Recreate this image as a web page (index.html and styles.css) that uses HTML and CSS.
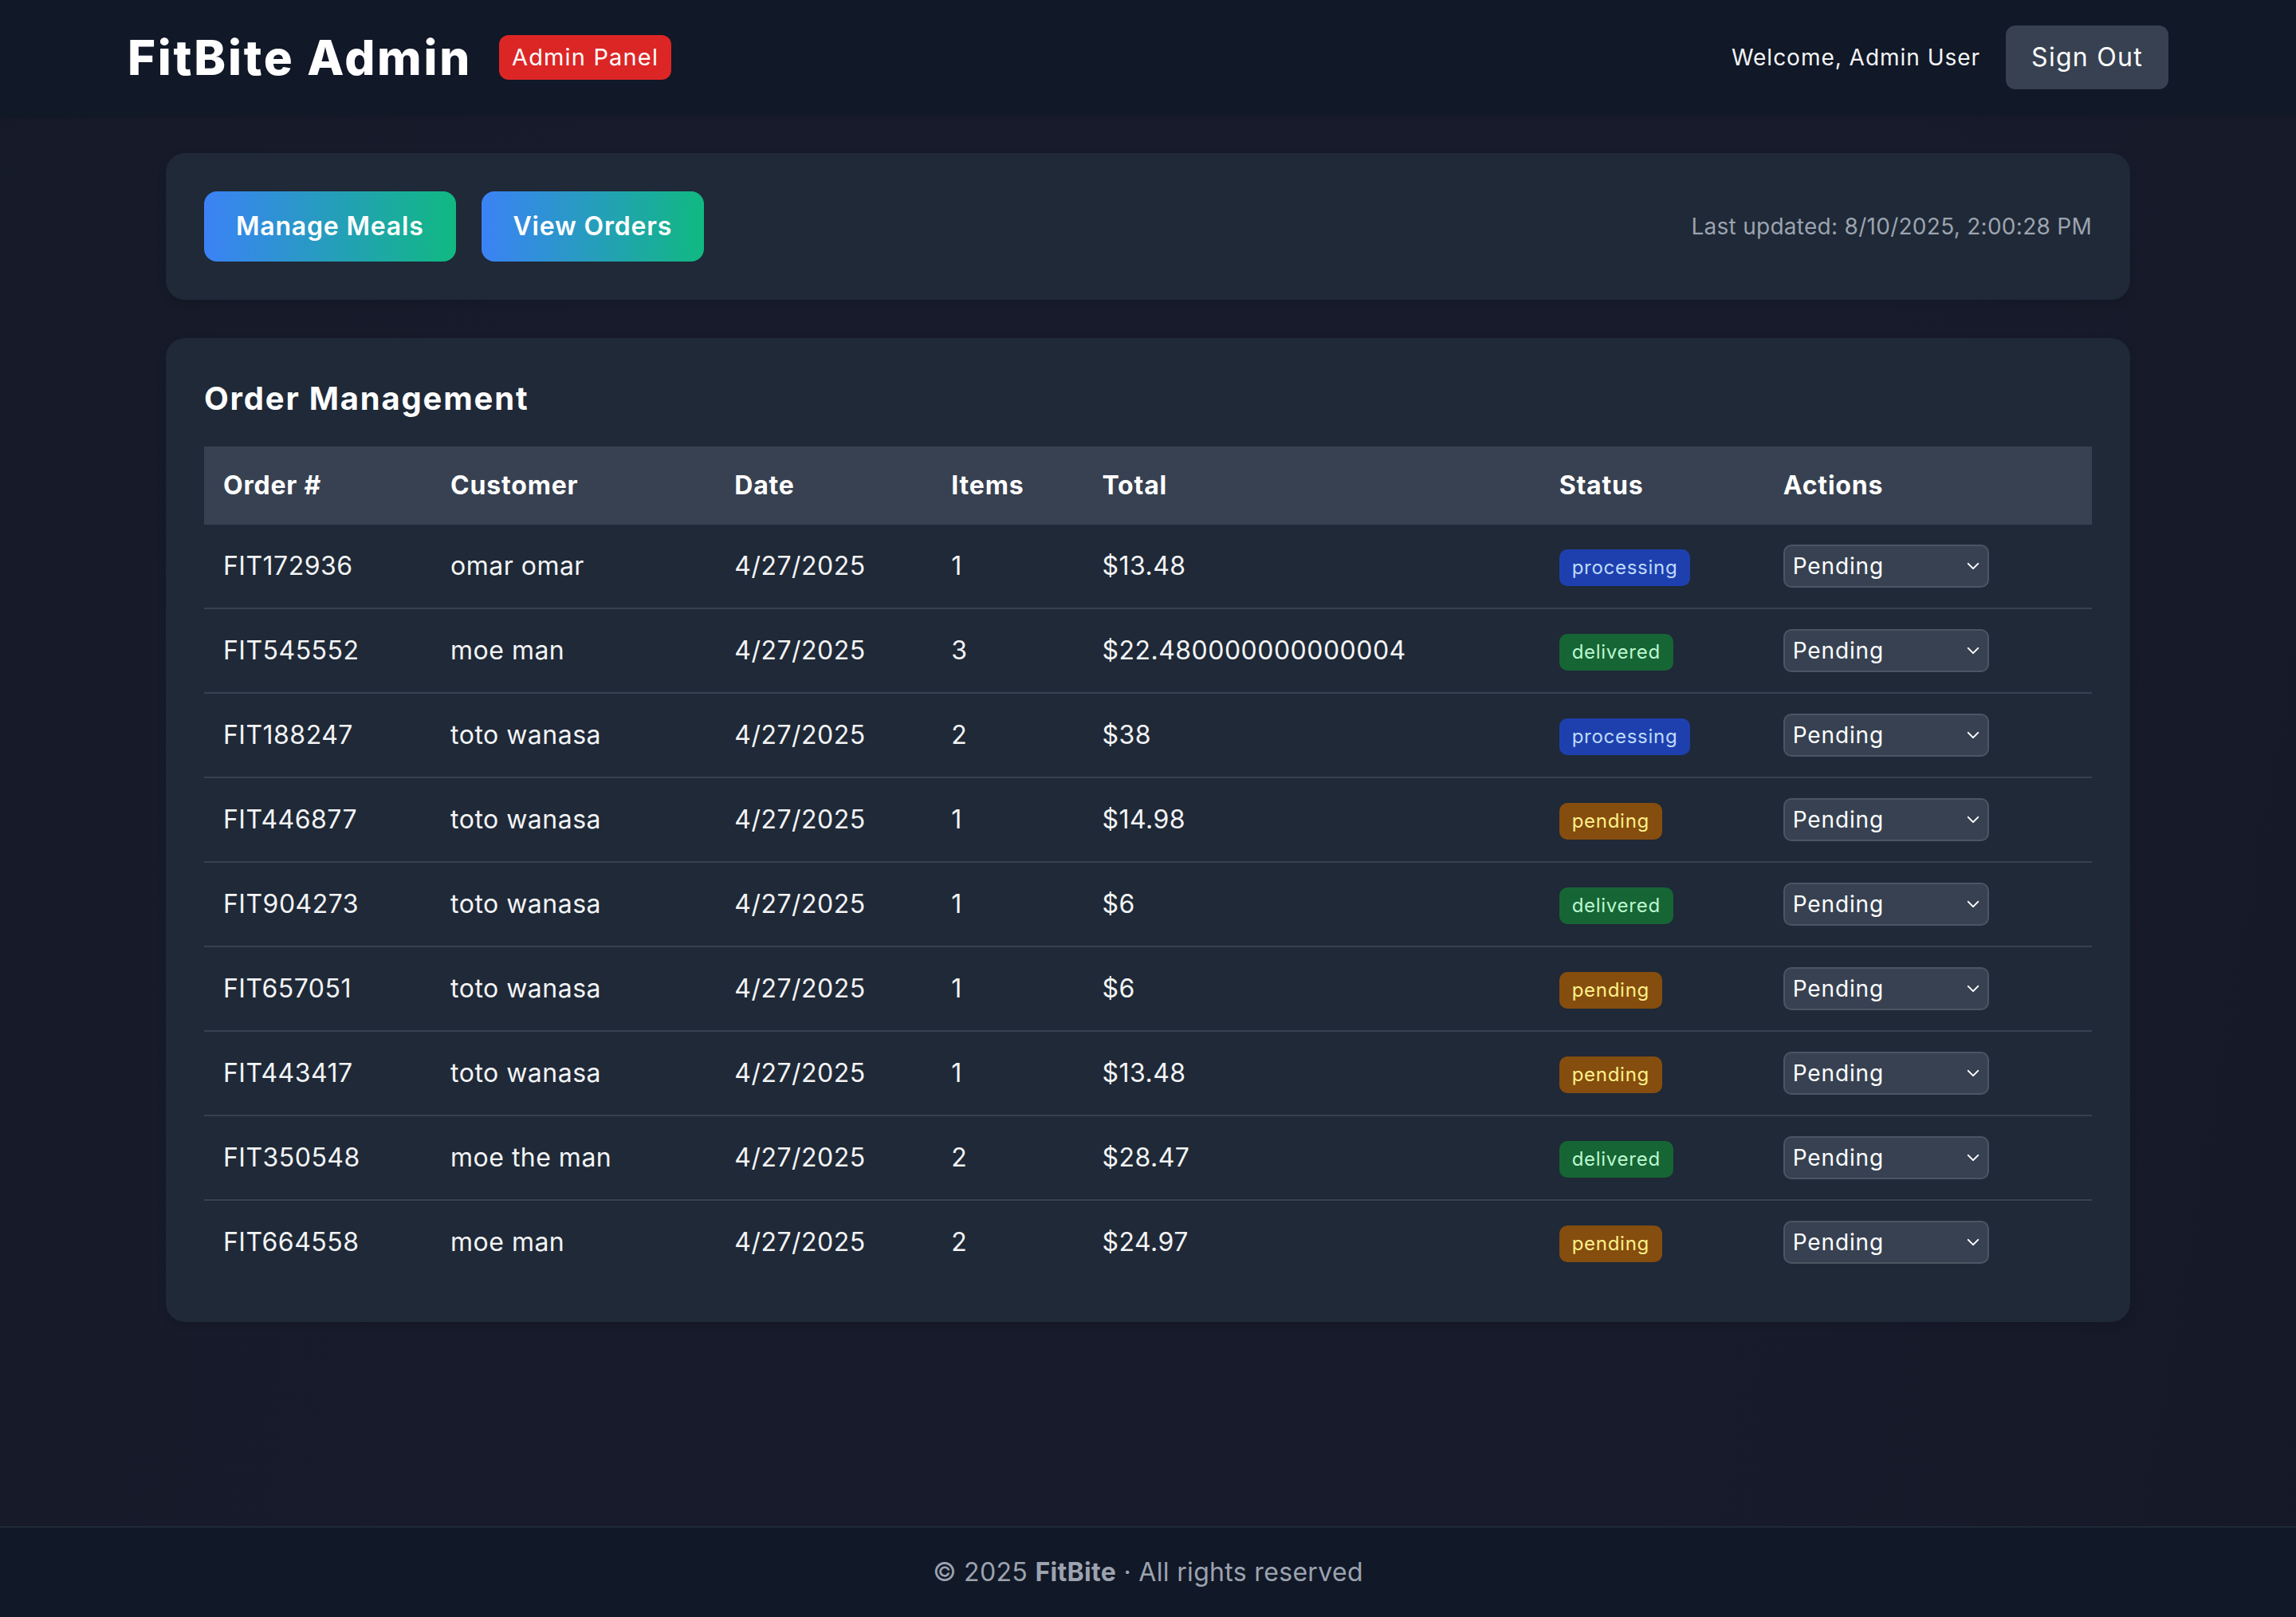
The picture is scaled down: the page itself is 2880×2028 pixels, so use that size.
FILE: index.html
```html
<!DOCTYPE html>
<html lang="en">
<head>
<meta charset="utf-8">
<title>FitBite Admin</title>
<link rel="stylesheet" href="styles.css">
</head>
<body>
<header class="topbar">
  <div class="topbar-inner">
    <div class="brand">
      <h1 class="brand-title">FitBite Admin</h1>
      <span class="brand-badge">Admin Panel</span>
    </div>
    <div class="user-area">
      <span class="welcome">Welcome, Admin User</span>
      <button class="signout">Sign Out</button>
    </div>
  </div>
</header>

<main class="main">
  <section class="card nav-card">
    <div class="nav-buttons">
      <button class="grad-btn">Manage Meals</button>
      <button class="grad-btn">View Orders</button>
    </div>
    <span class="updated">Last updated: 8/10/2025, 2:00:28 PM</span>
  </section>

  <section class="card orders-card">
    <h2 class="section-title">Order Management</h2>
    <table class="orders">
      <colgroup>
        <col class="c-order"><col class="c-customer"><col class="c-date"><col class="c-items"><col class="c-total"><col class="c-status"><col class="c-actions">
      </colgroup>
      <thead>
        <tr><th>Order #</th><th>Customer</th><th>Date</th><th>Items</th><th>Total</th><th>Status</th><th>Actions</th></tr>
      </thead>
      <tbody>
        <tr><td>FIT172936</td><td>omar omar</td><td>4/27/2025</td><td>1</td><td>$13.48</td><td><span class="status processing">processing</span></td><td><div class="select-wrap"><select class="status-select"><option>Pending</option><option>Processing</option><option>Delivered</option></select><svg class="chev" viewBox="0 0 16 16"><path d="M3 5.5l5 5 5-5" fill="none" stroke="currentColor" stroke-width="1.6" stroke-linecap="round" stroke-linejoin="round"/></svg></div></td></tr>
        <tr><td>FIT545552</td><td>moe man</td><td>4/27/2025</td><td>3</td><td>$22.480000000000004</td><td><span class="status delivered">delivered</span></td><td><div class="select-wrap"><select class="status-select"><option>Pending</option><option>Processing</option><option>Delivered</option></select><svg class="chev" viewBox="0 0 16 16"><path d="M3 5.5l5 5 5-5" fill="none" stroke="currentColor" stroke-width="1.6" stroke-linecap="round" stroke-linejoin="round"/></svg></div></td></tr>
        <tr><td>FIT188247</td><td>toto wanasa</td><td>4/27/2025</td><td>2</td><td>$38</td><td><span class="status processing">processing</span></td><td><div class="select-wrap"><select class="status-select"><option>Pending</option><option>Processing</option><option>Delivered</option></select><svg class="chev" viewBox="0 0 16 16"><path d="M3 5.5l5 5 5-5" fill="none" stroke="currentColor" stroke-width="1.6" stroke-linecap="round" stroke-linejoin="round"/></svg></div></td></tr>
        <tr><td>FIT446877</td><td>toto wanasa</td><td>4/27/2025</td><td>1</td><td>$14.98</td><td><span class="status pending">pending</span></td><td><div class="select-wrap"><select class="status-select"><option>Pending</option><option>Processing</option><option>Delivered</option></select><svg class="chev" viewBox="0 0 16 16"><path d="M3 5.5l5 5 5-5" fill="none" stroke="currentColor" stroke-width="1.6" stroke-linecap="round" stroke-linejoin="round"/></svg></div></td></tr>
        <tr><td>FIT904273</td><td>toto wanasa</td><td>4/27/2025</td><td>1</td><td>$6</td><td><span class="status delivered">delivered</span></td><td><div class="select-wrap"><select class="status-select"><option>Pending</option><option>Processing</option><option>Delivered</option></select><svg class="chev" viewBox="0 0 16 16"><path d="M3 5.5l5 5 5-5" fill="none" stroke="currentColor" stroke-width="1.6" stroke-linecap="round" stroke-linejoin="round"/></svg></div></td></tr>
        <tr><td>FIT657051</td><td>toto wanasa</td><td>4/27/2025</td><td>1</td><td>$6</td><td><span class="status pending">pending</span></td><td><div class="select-wrap"><select class="status-select"><option>Pending</option><option>Processing</option><option>Delivered</option></select><svg class="chev" viewBox="0 0 16 16"><path d="M3 5.5l5 5 5-5" fill="none" stroke="currentColor" stroke-width="1.6" stroke-linecap="round" stroke-linejoin="round"/></svg></div></td></tr>
        <tr><td>FIT443417</td><td>toto wanasa</td><td>4/27/2025</td><td>1</td><td>$13.48</td><td><span class="status pending">pending</span></td><td><div class="select-wrap"><select class="status-select"><option>Pending</option><option>Processing</option><option>Delivered</option></select><svg class="chev" viewBox="0 0 16 16"><path d="M3 5.5l5 5 5-5" fill="none" stroke="currentColor" stroke-width="1.6" stroke-linecap="round" stroke-linejoin="round"/></svg></div></td></tr>
        <tr><td>FIT350548</td><td>moe the man</td><td>4/27/2025</td><td>2</td><td>$28.47</td><td><span class="status delivered">delivered</span></td><td><div class="select-wrap"><select class="status-select"><option>Pending</option><option>Processing</option><option>Delivered</option></select><svg class="chev" viewBox="0 0 16 16"><path d="M3 5.5l5 5 5-5" fill="none" stroke="currentColor" stroke-width="1.6" stroke-linecap="round" stroke-linejoin="round"/></svg></div></td></tr>
        <tr><td>FIT664558</td><td>moe man</td><td>4/27/2025</td><td>2</td><td>$24.97</td><td><span class="status pending">pending</span></td><td><div class="select-wrap"><select class="status-select"><option>Pending</option><option>Processing</option><option>Delivered</option></select><svg class="chev" viewBox="0 0 16 16"><path d="M3 5.5l5 5 5-5" fill="none" stroke="currentColor" stroke-width="1.6" stroke-linecap="round" stroke-linejoin="round"/></svg></div></td></tr>
      </tbody>
    </table>
  </section>
</main>

<footer class="footer">
  <p class="footer-text">© 2025 <strong>FitBite</strong> · All rights reserved</p>
</footer>
</body>
</html>
```

FILE: styles.css
```css
* { box-sizing: border-box; }

html, body { margin: 0; padding: 0; }

body {
  min-height: 100vh;
  display: flex;
  flex-direction: column;
  font-family: Inter, "Noto Sans", "DejaVu Sans", sans-serif;
  letter-spacing: 0.02em;
  color: #f3f4f6;
  background: linear-gradient(100deg, #151a28 0%, #181b2b 25%, #181b2b 75%, #151927 100%);
}

/* Header */
.topbar {
  background: #111827;
  box-shadow: 0 2px 6px rgba(0, 0, 0, 0.15);
}

.topbar-inner {
  max-width: 2560px;
  margin: 0 auto;
  padding: 32px 0;
  display: flex;
  align-items: center;
  justify-content: space-between;
}

.brand {
  display: flex;
  align-items: center;
  gap: 34px;
}

.brand-title {
  margin: 0;
  font-size: 60px;
  line-height: 72px;
  font-weight: 800;
  color: #ffffff;
  letter-spacing: 0.045em;
}

.brand-badge {
  background: #dc2626;
  color: #ffffff;
  font-size: 29px;
  line-height: 40px;
  padding: 8px 16px;
  border-radius: 12px;
  letter-spacing: 0.04em;
}

.user-area {
  display: flex;
  align-items: center;
  gap: 32px;
}

.welcome {
  font-size: 28px;
  color: #f3f4f6;
  letter-spacing: 0.035em;
}

.signout {
  font-family: inherit;
  letter-spacing: 0.04em;
  background: #374151;
  color: #ffffff;
  border: 0;
  border-radius: 12px;
  font-size: 32px;
  line-height: 48px;
  padding: 16px 32px;
}

/* Main */
.main {
  flex: 1;
  width: 100%;
  max-width: 2560px;
  margin: 0 auto;
  padding: 48px 48px;
  display: flex;
  flex-direction: column;
  gap: 48px;
}

.card {
  background: #1f2937;
  border-radius: 24px;
  padding: 48px;
  box-shadow: 0 4px 12px rgba(0, 0, 0, 0.12);
}

.nav-card {
  display: flex;
  align-items: center;
  justify-content: space-between;
}

.nav-buttons {
  display: flex;
  gap: 32px;
}

.grad-btn {
  font-family: inherit;
  letter-spacing: 0.025em;
  background: linear-gradient(90deg, #3b82f6 0%, #10b981 100%);
  color: #ffffff;
  border: 0;
  border-radius: 16px;
  font-size: 32px;
  font-weight: 600;
  line-height: 48px;
  padding: 20px 40px;
}

.updated {
  font-size: 28px;
  color: #9ca3af;
  letter-spacing: 0.01em;
}

/* Orders */
.section-title {
  margin: 0 0 32px;
  font-size: 40px;
  line-height: 56px;
  font-weight: 700;
  color: #ffffff;
  letter-spacing: 0.045em;
}

.orders {
  width: 100%;
  border-collapse: collapse;
  table-layout: fixed;
}

.c-order { width: 285px; }
.c-customer { width: 356px; }
.c-date { width: 272px; }
.c-items { width: 189px; }
.c-total { width: 573px; }
.c-status { width: 281px; }
.c-actions { width: 411px; }

.orders th {
  background: #374151;
  text-align: left;
  font-size: 32px;
  line-height: 48px;
  font-weight: 700;
  color: #ffffff;
  padding: 25px 24px;
  letter-spacing: 0.025em;
}

.orders td {
  font-size: 32px;
  line-height: 48px;
  color: #f3f4f6;
  padding: 25px 24px;
  vertical-align: middle;
  white-space: nowrap;
  letter-spacing: 0.015em;
}

.orders tbody tr + tr td {
  border-top: 2px solid #374151;
}

.status {
  display: inline-block;
  font-size: 24px;
  line-height: 32px;
  padding: 7px 16px;
  border-radius: 10px;
  letter-spacing: 0.03em;
}

.status.processing { background: #1e40af; color: #bfdbfe; }
.status.delivered { background: #166534; color: #bbf7d0; }
.status.pending { background: #854d0e; color: #fef08a; }

.select-wrap {
  position: relative;
  width: 258px;
}

.status-select {
  appearance: none;
  -webkit-appearance: none;
  display: block;
  width: 258px;
  height: 54px;
  background: #374151;
  border: 2px solid #4b5563;
  border-radius: 10px;
  color: #ffffff;
  font-family: inherit;
  letter-spacing: 0.03em;
  font-size: 28px;
  padding: 0 40px 0 10px;
}

.chev {
  position: absolute;
  right: 10px;
  top: 50%;
  width: 20px;
  height: 20px;
  margin-top: -10px;
  color: #ffffff;
  pointer-events: none;
}

/* Footer */
.footer {
  background: #111827;
  border-top: 2px solid #1f2937;
  padding: 32px 0;
}

.footer-text {
  margin: 0;
  text-align: center;
  font-size: 32px;
  line-height: 48px;
  color: #9ca3af;
}

.footer-text strong {
  font-weight: 700;
}
```
